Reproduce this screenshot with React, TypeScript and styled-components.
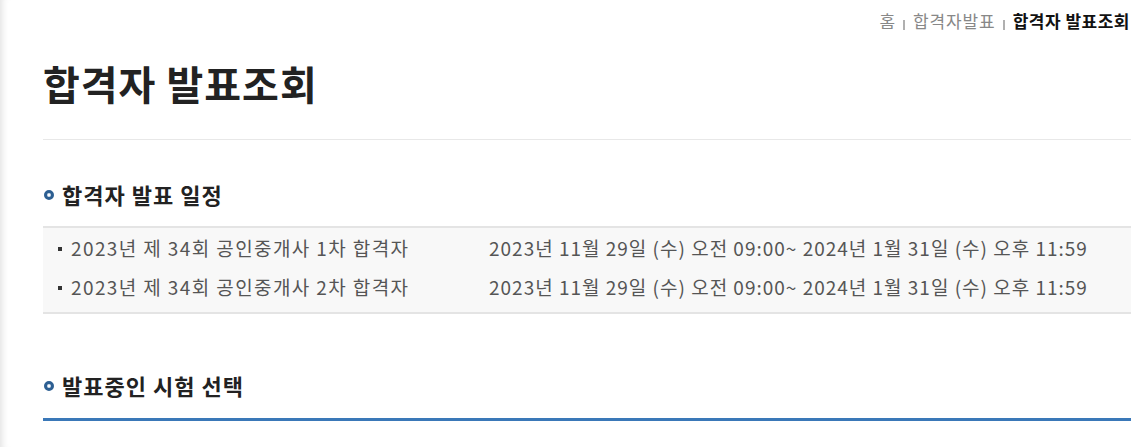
import { ReactElement } from 'react';
import styled, { createGlobalStyle } from 'styled-components';

const GlobalStyle = createGlobalStyle`
  html, body {
    margin: 0;
    padding: 0;
    background: #fff;
  }
  body {
    font-family: 'Noto Sans CJK KR', 'Noto Sans', sans-serif;
    color: #333;
  }
  * {
    box-sizing: border-box;
  }
`;

interface Schedule {
  title: string;
  period: string;
}

const schedules: Schedule[] = [
  {
    title: '2023년 제 34회 공인중개사 1차 합격자',
    period: '2023년 11월 29일 (수) 오전 09:00~ 2024년 1월 31일 (수) 오후 11:59',
  },
  {
    title: '2023년 제 34회 공인중개사 2차 합격자',
    period: '2023년 11월 29일 (수) 오전 09:00~ 2024년 1월 31일 (수) 오후 11:59',
  },
];

export default function App(): ReactElement {
  return (
    <>
      <GlobalStyle />
      <Page>
        <Breadcrumb>
          <Crumb>홈</Crumb>
          <Sep />
          <Crumb>합격자발표</Crumb>
          <Sep />
          <Crumb current>합격자 발표조회</Crumb>
        </Breadcrumb>

        <Title>합격자 발표조회</Title>

        <SectionTitle>
          <Dot />
          합격자 발표 일정
        </SectionTitle>
        <ScheduleBox>
          {schedules.map((s) => (
            <ScheduleRow key={s.title}>
              <RowName>
                <Square />
                {s.title}
              </RowName>
              <RowPeriod>{s.period}</RowPeriod>
            </ScheduleRow>
          ))}
        </ScheduleBox>

        <SectionTitle second>
          <Dot />
          발표중인 시험 선택
        </SectionTitle>
        <BlueRule />
      </Page>
    </>
  );
}

const Page = styled.div`
  min-height: 447px;
  padding: 0 13px 0 43px;
  box-shadow: inset 8px 0 7px -6px rgba(0, 0, 0, 0.12);
`;

const Breadcrumb = styled.div`
  display: flex;
  justify-content: flex-end;
  align-items: center;
  height: 40px;
  font-size: 17px;
  padding-right: 1px;
`;

const Crumb = styled.span<{ current?: boolean }>`
  color: ${(p) => (p.current ? '#111' : '#888')};
  font-weight: ${(p) => (p.current ? 700 : 400)};
  letter-spacing: ${(p) => (p.current ? '0.5px' : '0.9px')};
`;

const Sep = styled.span`
  width: 2px;
  height: 10px;
  background: #b0b0b0;
  margin: 10px 8px 0 7px;
`;

const Title = styled.h1`
  margin: 0;
  padding: 14px 0 27px;
  font-size: 40px;
  font-weight: 700;
  color: #222;
  line-height: 58px;
  letter-spacing: 1px;
  border-bottom: 1px solid #e8e8e8;
`;

const SectionTitle = styled.h2<{ second?: boolean }>`
  display: flex;
  align-items: center;
  margin: ${(p) => (p.second ? '57px 0 0' : '40px 0 0')};
  font-size: 22px;
  font-weight: 700;
  color: #222;
  line-height: 28px;
  letter-spacing: 1px;
`;

const Dot = styled.span`
  flex: none;
  width: 10px;
  height: 10px;
  border: 3px solid #2d5f92;
  border-radius: 50%;
  background: #fff;
  margin: 2px 8px 0 1px;
  box-shadow: inset 0 0 1px #5b8cc0;
`;

const ScheduleBox = styled.div`
  margin-top: 18px;
  padding: 0 0 6px;
  background: #f8f8f8;
  border-top: 2px solid #e4e4e4;
  border-bottom: 2px solid #e4e4e4;
`;

const ScheduleRow = styled.div`
  display: flex;
  align-items: center;
  height: 39px;
  font-size: 19px;
  color: #555;
  letter-spacing: 1px;
`;

const RowName = styled.div`
  display: flex;
  align-items: center;
  width: 446px;
  padding-left: 15px;
  letter-spacing: 1.4px;
`;

const Square = styled.span`
  flex: none;
  width: 4px;
  height: 4px;
  background: #333;
  margin: 2px 9px 0 0;
`;

const RowPeriod = styled.div``;

const BlueRule = styled.div`
  margin-top: 19px;
  height: 3px;
  background: #3a78b8;
`;
